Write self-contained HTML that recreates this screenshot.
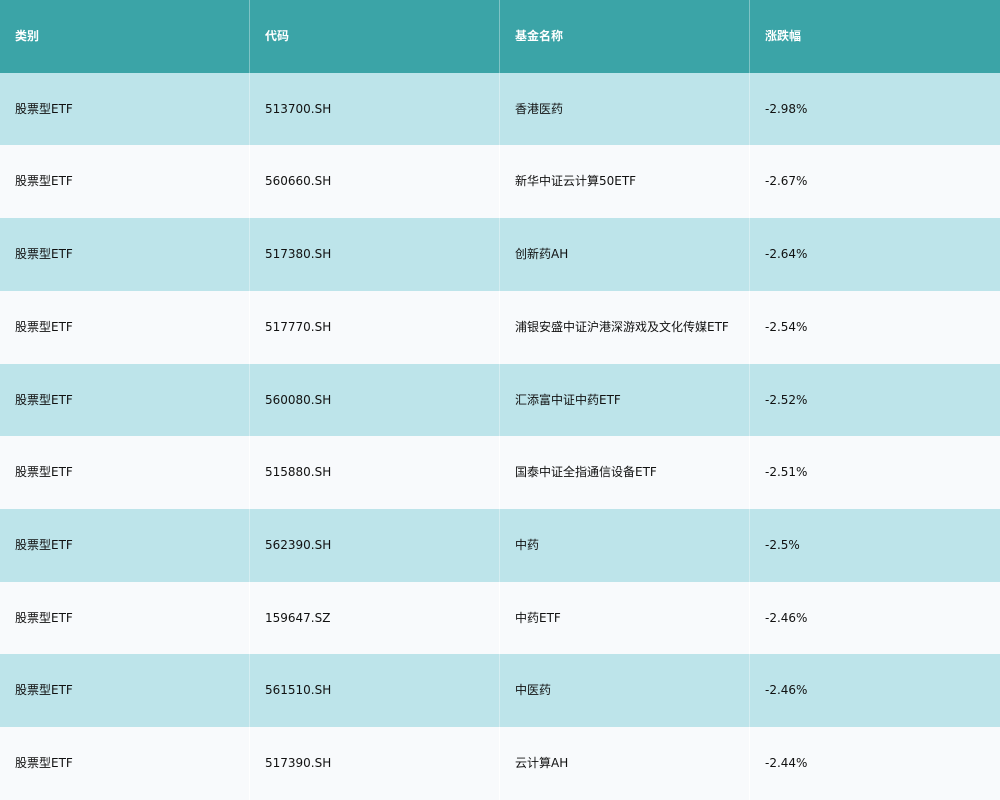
<!DOCTYPE html><html><head><meta charset="utf-8"><style>
body{margin:0;width:1000px;height:800px;overflow:hidden;background:#f8fafc;font-family:"DejaVu Sans","Noto Sans CJK SC",sans-serif;font-size:12px;color:#111}
.r{display:flex;height:72.727px}
.r div{width:250px;box-sizing:border-box;padding-left:15px;border-right:1px solid rgba(255,255,255,.35);position:relative}
.r div span{position:absolute;left:15px;top:28px;line-height:16px;height:16px;white-space:nowrap}
.r div:last-child{border-right:none}
.h{background:#3ba4a7;color:#fff;font-weight:bold}
.h div span{top:28px}
.a{background:#bde4ea}
.b{background:#f8fafc}
.b div{border-right:1px solid #fff}
</style></head><body>
<div class="r h"><div><span>类别</span></div><div><span>代码</span></div><div><span>基金名称</span></div><div><span>涨跌幅</span></div></div>
<div class="r a"><div><span>股票型ETF</span></div><div><span>513700.SH</span></div><div><span>香港医药</span></div><div><span>-2.98%</span></div></div>
<div class="r b"><div><span>股票型ETF</span></div><div><span>560660.SH</span></div><div><span>新华中证云计算50ETF</span></div><div><span>-2.67%</span></div></div>
<div class="r a"><div><span>股票型ETF</span></div><div><span>517380.SH</span></div><div><span>创新药AH</span></div><div><span>-2.64%</span></div></div>
<div class="r b"><div><span>股票型ETF</span></div><div><span>517770.SH</span></div><div><span>浦银安盛中证沪港深游戏及文化传媒ETF</span></div><div><span>-2.54%</span></div></div>
<div class="r a"><div><span>股票型ETF</span></div><div><span>560080.SH</span></div><div><span>汇添富中证中药ETF</span></div><div><span>-2.52%</span></div></div>
<div class="r b"><div><span>股票型ETF</span></div><div><span>515880.SH</span></div><div><span>国泰中证全指通信设备ETF</span></div><div><span>-2.51%</span></div></div>
<div class="r a"><div><span>股票型ETF</span></div><div><span>562390.SH</span></div><div><span>中药</span></div><div><span>-2.5%</span></div></div>
<div class="r b"><div><span>股票型ETF</span></div><div><span>159647.SZ</span></div><div><span>中药ETF</span></div><div><span>-2.46%</span></div></div>
<div class="r a"><div><span>股票型ETF</span></div><div><span>561510.SH</span></div><div><span>中医药</span></div><div><span>-2.46%</span></div></div>
<div class="r b"><div><span>股票型ETF</span></div><div><span>517390.SH</span></div><div><span>云计算AH</span></div><div><span>-2.44%</span></div></div>
</body></html>
